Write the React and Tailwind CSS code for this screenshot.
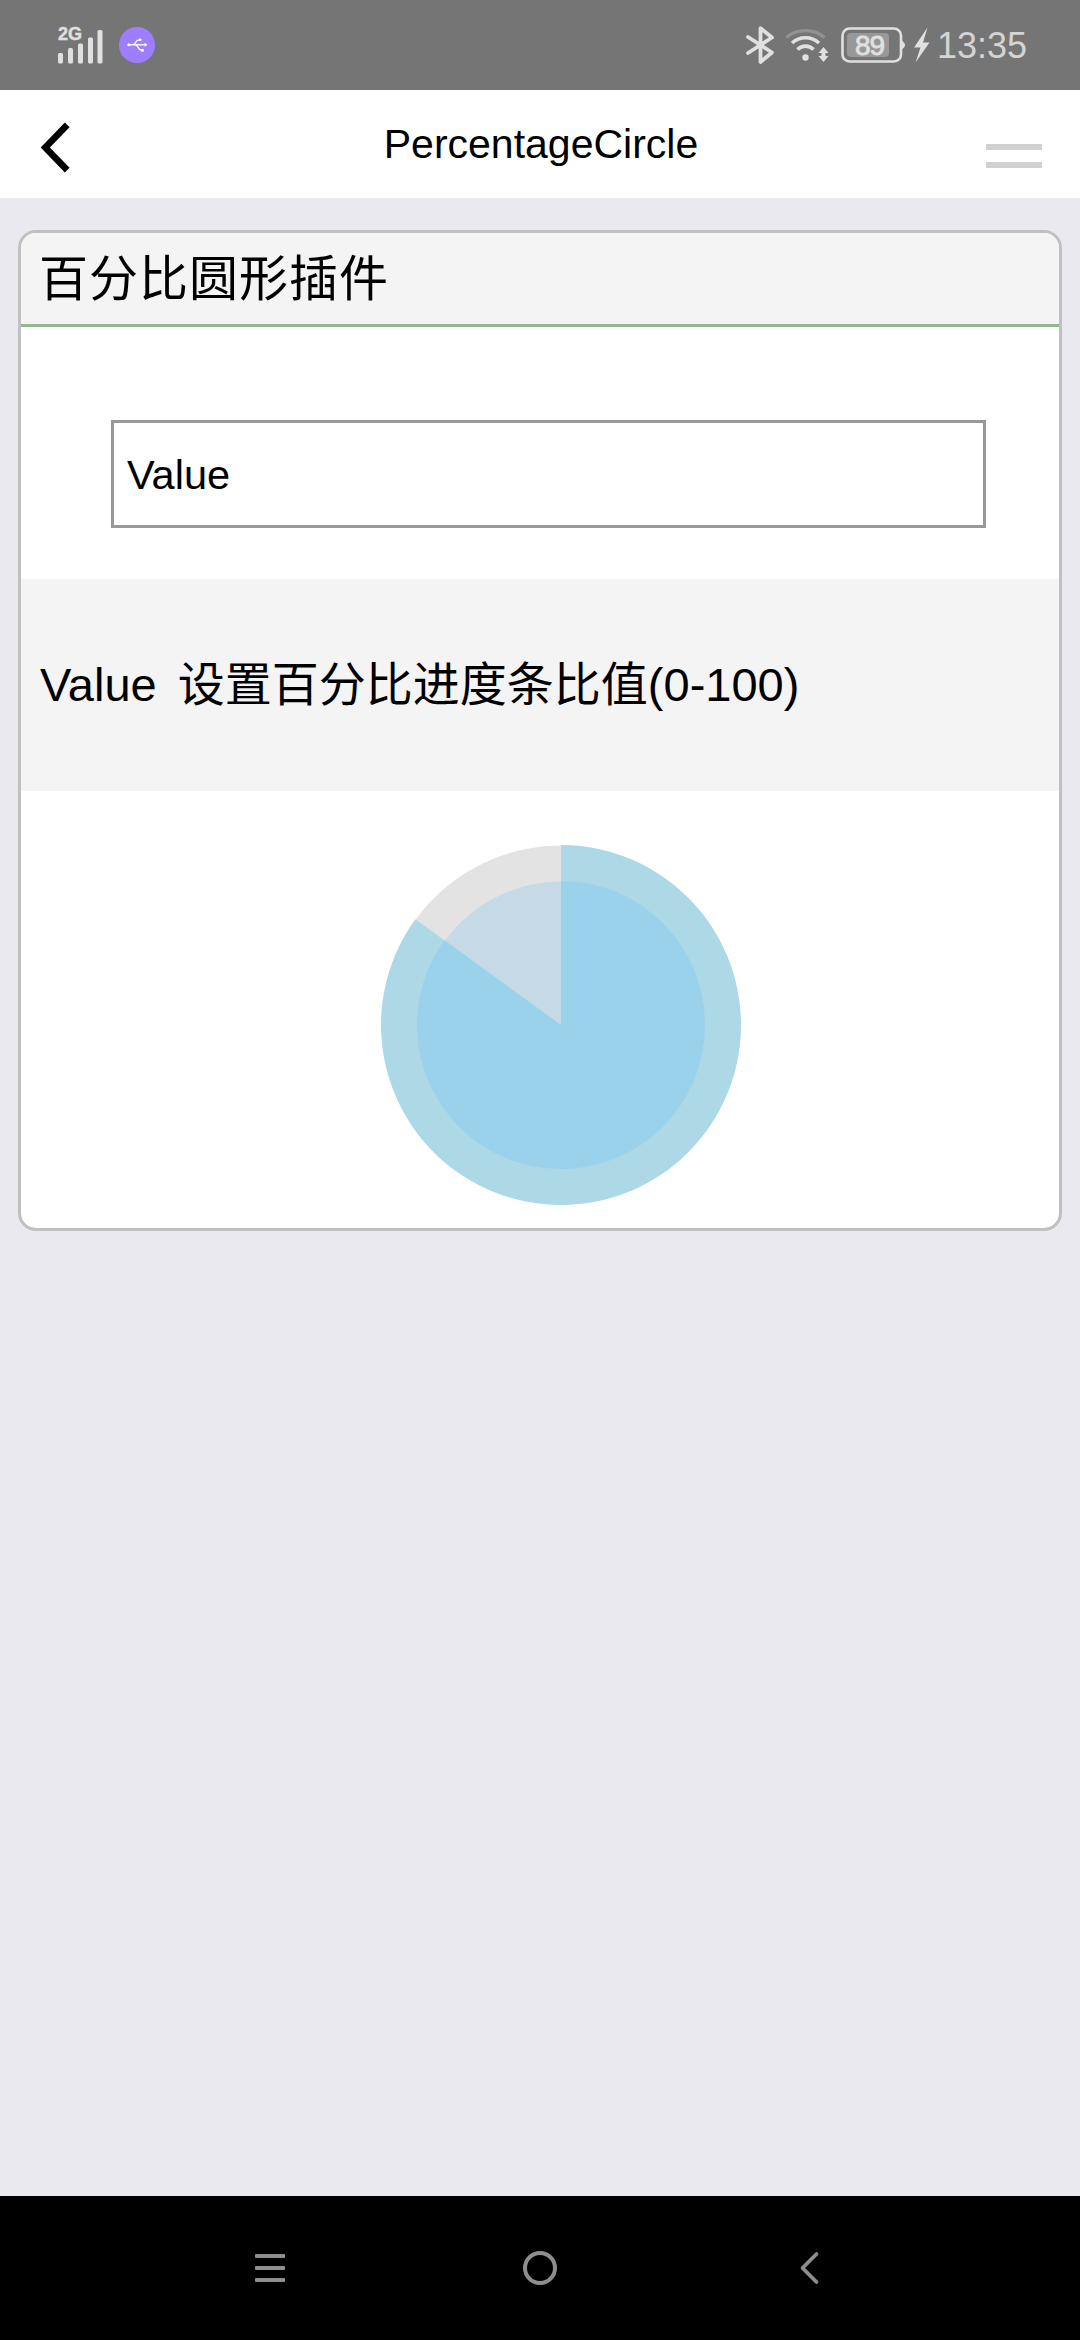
import React from "react";

const PERCENT = 85;

function SignalIcon() {
  return (
    <svg className="w-[46px] h-[40px] shrink-0" viewBox="0 0 46 40" fill="#e0e0e0">
      <text x="0" y="15" fontFamily="Liberation Sans, sans-serif" fontWeight="700" fontSize="18" stroke="#e0e0e0" strokeWidth="0.4">
        2G
      </text>
      <rect x="0" y="28" width="5" height="10.5" rx="1.5" />
      <rect x="10" y="23" width="5" height="15.5" rx="1.5" />
      <rect x="20" y="18.5" width="5" height="20" rx="1.5" />
      <rect x="30" y="12.5" width="5" height="26" rx="1.5" />
      <rect x="39.5" y="5" width="5" height="33.5" rx="1.5" />
    </svg>
  );
}

function UsbIcon() {
  return (
    <svg className="w-9 h-9 shrink-0" viewBox="0 0 36 36">
      <circle cx="18" cy="18" r="18" fill="#9f7dff" />
      <g fill="none" stroke="#fff" strokeWidth="1.3">
        <path d="M9.5 17.8H27" />
        <path d="M14 17.8C17 17.5 16 12.8 20.5 12.8" />
        <path d="M16.5 17.8C19.5 18 18.5 23.2 23 23.2" />
      </g>
      <g fill="#fff">
        <circle cx="9.8" cy="17.8" r="1.5" />
        <circle cx="21.2" cy="12.8" r="1.4" />
        <rect x="22" y="22" width="2.8" height="2.6" />
        <path d="M25.5 15.8L28.5 17.8L25.5 19.8Z" />
      </g>
    </svg>
  );
}

function BluetoothIcon() {
  return (
    <svg className="w-[30px] h-[40px] shrink-0" viewBox="0 0 30 40" fill="none" stroke="#e0e0e0" strokeWidth="3.8" strokeLinejoin="round" strokeLinecap="round">
      <path d="M3 12L27 27.5L15.5 37V3.2L27 12.5L3 28" />
    </svg>
  );
}

function WifiIcon() {
  return (
    <svg className="w-[46px] h-[36px] shrink-0" viewBox="0 0 46 36" fill="none">
      <path d="M1.5 10.5C12 1.3 29 1.3 39.5 10.5" stroke="#929292" strokeWidth="3.4" />
      <path d="M7 16C14.5 9 26.5 9 34 16" stroke="#e0e0e0" strokeWidth="3.6" />
      <path d="M12.5 22.5C17 18 24 18 28.5 22.5" stroke="#e0e0e0" strokeWidth="3.6" />
      <circle cx="20.5" cy="30.5" r="3.2" fill="#e0e0e0" />
      <path d="M38.5 20L43.5 26H40.5V29H43.5L38.5 35L33.5 29H36.5V26H33.5Z" fill="#e0e0e0" />
    </svg>
  );
}

function BatteryIcon() {
  return (
    <svg className="w-[65px] h-[36px] shrink-0" viewBox="0 0 65 36">
      <rect x="1.5" y="1.5" width="58.5" height="33" rx="7" fill="none" stroke="#e0e0e0" strokeWidth="2.6" />
      <path d="M61 13.5C62 15 64 15.5 64 18C64 20.5 62 21 61 22.5Z" fill="#e0e0e0" />
      <rect x="6" y="6" width="42" height="24" rx="4" fill="#989898" />
      <text x="14" y="27.5" fontFamily="Liberation Sans, sans-serif" fontSize="28" fill="#e0e0e0" stroke="#e0e0e0" strokeWidth="0.8" textLength="30">
        89
      </text>
    </svg>
  );
}

function BoltIcon() {
  return (
    <svg className="w-[16px] h-[36px] shrink-0" viewBox="0 0 16 36" fill="#e0e0e0">
      <path d="M13.5 0.5L0 20.5H6.5L1.5 35.5L15.5 15.5H9Z" />
    </svg>
  );
}

function StatusBar() {
  return (
    <div className="flex h-[90px] items-center justify-between bg-[#757575] pl-[58px] pr-[53px]">
      <div className="flex items-center gap-[15px]">
        <SignalIcon />
        <UsbIcon />
      </div>
      <div className="flex items-center text-[#d4d4d4]">
        <BluetoothIcon />
        <div className="ml-[10px]"><WifiIcon /></div>
        <div className="ml-[10px]"><BatteryIcon /></div>
        <div className="ml-[8px]"><BoltIcon /></div>
        <span className="ml-[7px] mt-[2px] text-[36px] leading-[36px]">13:35</span>
      </div>
    </div>
  );
}

function Header() {
  return (
    <header className="flex h-[108px] items-start justify-between bg-white pl-10 pr-[38px]">
      <svg className="mt-[31px] h-[53px] w-[56px]" viewBox="0 0 56 53" fill="none" stroke="#000" strokeWidth="6.6">
        <path d="M27.2 3.9L5.3 26.5L27.2 49.1" />
      </svg>
      <h1 className="mt-[30px] text-[41px] leading-[48px]">PercentageCircle</h1>
      <div className="mt-[54px] flex w-[56px] flex-col gap-[12px]">
        <div className="h-[6px] bg-[#d0d1cf]" />
        <div className="h-[6px] bg-[#d0d1cf]" />
      </div>
    </header>
  );
}

function PercentageCircle({ percent }) {
  const angle = (percent / 100) * 2 * Math.PI;
  const slice = (r) => {
    const x = 180 + r * Math.sin(angle);
    const y = 180 - r * Math.cos(angle);
    return `M180 180V${180 - r}A${r} ${r} 0 ${percent > 50 ? 1 : 0} 1 ${x} ${y}Z`;
  };

  return (
    <svg className="h-[360px] w-[360px]" viewBox="0 0 360 360">
      <circle cx="180" cy="180" r="179.5" fill="#e3e3e3" />
      <path d={slice(180)} fill="#add8e6" />
      <circle cx="180" cy="180" r="143.5" fill="#c6d9e6" />
      <path d={slice(144)} fill="#9ad1eb" />
    </svg>
  );
}

function NavBar() {
  return (
    <nav className="flex h-[144px] items-center justify-between bg-black px-[252px]">
      {/* Recent apps */}
      <div className="flex w-9 flex-col gap-2 px-[3px]">
        <div className="h-1 rounded-[1px] bg-[#8e8e8e]" />
        <div className="h-1 rounded-[1px] bg-[#8e8e8e]" />
        <div className="h-1 rounded-[1px] bg-[#8e8e8e]" />
      </div>
      {/* Home */}
      <div className="h-[34px] w-[34px] rounded-full border-4 border-[#8e8e8e]" />
      {/* Back */}
      <svg className="h-9 w-9" viewBox="0 0 36 36" fill="none" stroke="#8e8e8e" strokeWidth="3.8" strokeLinecap="round" strokeLinejoin="round">
        <path d="M24.5 4L10.500 18L24.5 32" />
      </svg>
    </nav>
  );
}

export default function App() {
  return (
    <div className="flex h-[2340px] w-[1080px] flex-col bg-[#e9e9ef] font-['Liberation_Sans','Noto_Sans_CJK_SC',sans-serif] text-black">
      <StatusBar />
      <Header />
      <main className="flex-1 px-[18px] pt-8">
        <section className="h-[1001px] overflow-hidden rounded-[18px] border-[3px] border-[#c0c0c0] bg-white">
          <h2 className="flex h-[94px] items-center border-b-[3px] border-[#93b993] bg-[#f4f4f4] pl-[18px] text-[49px] leading-[72px] tracking-[1px]">
            百分比圆形插件
          </h2>
          <div className="h-[252px] pl-[90px] pt-[93px]">
            <div className="flex h-[108px] w-[875px] items-center border-[3px] border-[#999999] pl-[13px] pt-[2px] text-[41.5px]">
              Value
            </div>
          </div>
          <p className="flex h-[212px] items-center whitespace-pre bg-[#f4f4f4] pl-[19px] text-[47px] [word-spacing:-2.5px]">
            {"Value  设置百分比进度条比值(0-100)"}
          </p>
          <div className="pl-[360px] pt-[54px]">
            <PercentageCircle percent={PERCENT} />
          </div>
        </section>
      </main>
      <NavBar />
    </div>
  );
}
